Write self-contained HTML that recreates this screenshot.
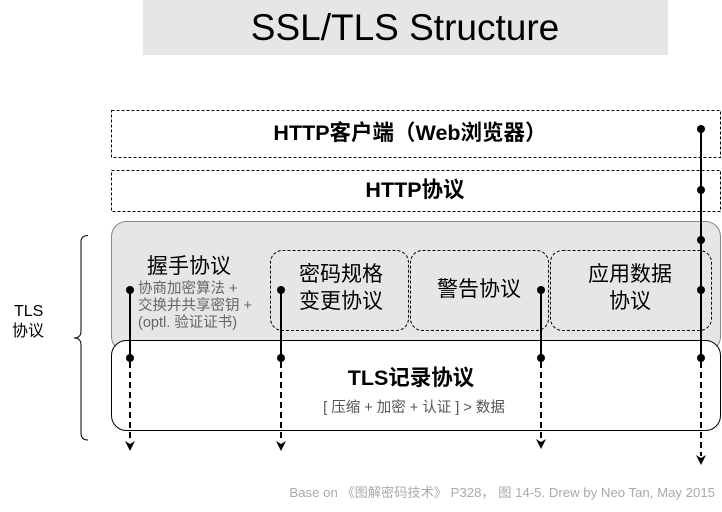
<!DOCTYPE html>
<html><head><meta charset="utf-8"><style>
html,body{margin:0;padding:0;background:#fff;width:722px;height:512px;overflow:hidden}
svg{display:block}
text{font-family:"Liberation Sans","Noto Sans CJK SC",sans-serif}
</style></head><body>
<svg width="722" height="512" viewBox="0 0 722 512" xmlns="http://www.w3.org/2000/svg">
<rect x="143" y="0" width="525" height="55" fill="#e6e6e6"/>
<text x="405" y="40" font-size="37" text-anchor="middle" fill="#000">SSL/TLS Structure</text>

<rect x="111.5" y="110.5" width="609" height="47" fill="none" stroke="#000" stroke-dasharray="3,2"/>
<text x="410" y="140" font-size="21.5" font-weight="bold" text-anchor="middle">HTTP客户端（Web浏览器）</text>
<rect x="111.5" y="170.5" width="609" height="41" fill="none" stroke="#000" stroke-dasharray="3,2"/>
<text x="415" y="197" font-size="21.5" font-weight="bold" text-anchor="middle">HTTP协议</text>

<rect x="111.5" y="221.5" width="609" height="130" rx="15" fill="#e6e6e6" stroke="#888"/>
<rect x="111.5" y="340.5" width="609" height="90" rx="15" fill="#fff" stroke="#000"/>

<rect x="270.5" y="250.5" width="138" height="80" rx="12" fill="none" stroke="#000" stroke-dasharray="3,2"/>
<rect x="410.5" y="250.5" width="138" height="80" rx="12" fill="none" stroke="#000" stroke-dasharray="3,2"/>
<rect x="550.5" y="250.5" width="161" height="80" rx="12" fill="none" stroke="#000" stroke-dasharray="3,2"/>

<text x="189" y="273" font-size="21" text-anchor="middle">握手协议</text>
<text x="138" y="293" font-size="14.5" fill="#666">协商加密算法 +</text>
<text x="138" y="310" font-size="14.5" fill="#666">交换并共享密钥 +</text>
<text x="138" y="327" font-size="14.5" fill="#666">(optl. 验证证书)</text>
<text x="341" y="281" font-size="21" text-anchor="middle">密码规格</text>
<text x="341" y="308" font-size="21" text-anchor="middle">变更协议</text>
<text x="479" y="296" font-size="21" text-anchor="middle">警告协议</text>
<text x="630" y="281" font-size="21" text-anchor="middle">应用数据</text>
<text x="630" y="308" font-size="21" text-anchor="middle">协议</text>

<text x="411" y="385" font-size="21.5" font-weight="bold" text-anchor="middle">TLS记录协议</text>
<text x="414" y="412" font-size="14.5" fill="#555" text-anchor="middle">[ 压缩 + 加密 + 认证 ] &gt; 数据</text>

<g stroke="#000" stroke-width="2" fill="none">
<line x1="130" y1="290" x2="130" y2="358"/>
<line x1="281" y1="290" x2="281" y2="358"/>
<line x1="541" y1="290" x2="541" y2="358"/>
<line x1="701" y1="129" x2="701" y2="358"/>
<g stroke-dasharray="6,4">
<line x1="130" y1="362" x2="130" y2="442"/>
<line x1="281" y1="362" x2="281" y2="442"/>
<line x1="541" y1="362" x2="541" y2="440"/>
<line x1="701" y1="362" x2="701" y2="456"/>
</g>
</g>
<g fill="#000">
<circle cx="130" cy="290" r="4"/><circle cx="130" cy="358" r="4"/>
<circle cx="281" cy="290" r="4"/><circle cx="281" cy="358" r="4"/>
<circle cx="541" cy="290" r="4"/><circle cx="541" cy="358" r="4"/>
<circle cx="701" cy="129" r="4"/><circle cx="701" cy="190" r="4"/><circle cx="701" cy="240" r="4"/><circle cx="701" cy="290" r="4"/><circle cx="701" cy="358" r="4"/>
<path d="M125 441 L130 451 L135 441 L130 444Z"/>
<path d="M276 441 L281 451 L286 441 L281 444Z"/>
<path d="M536 439 L541 449 L546 439 L541 442Z"/>
<path d="M696 455 L701 465 L706 455 L701 458Z"/>
</g>

<path d="M88 235.5 Q81 235.5 81 242 L81 331 Q81 338 74 338 Q81 338 81 345 L81 433 Q81 440 88 440" fill="none" stroke="#000" stroke-width="1"/>
<text x="14" y="316" font-size="16">TLS</text>
<text x="12" y="336" font-size="16">协议</text>

<text x="715" y="497" font-size="13.2" fill="#aaa" text-anchor="end">Base on 《图解密码技术》 P328， 图 14-5. Drew by Neo Tan, May 2015</text>
</svg>
</body></html>
